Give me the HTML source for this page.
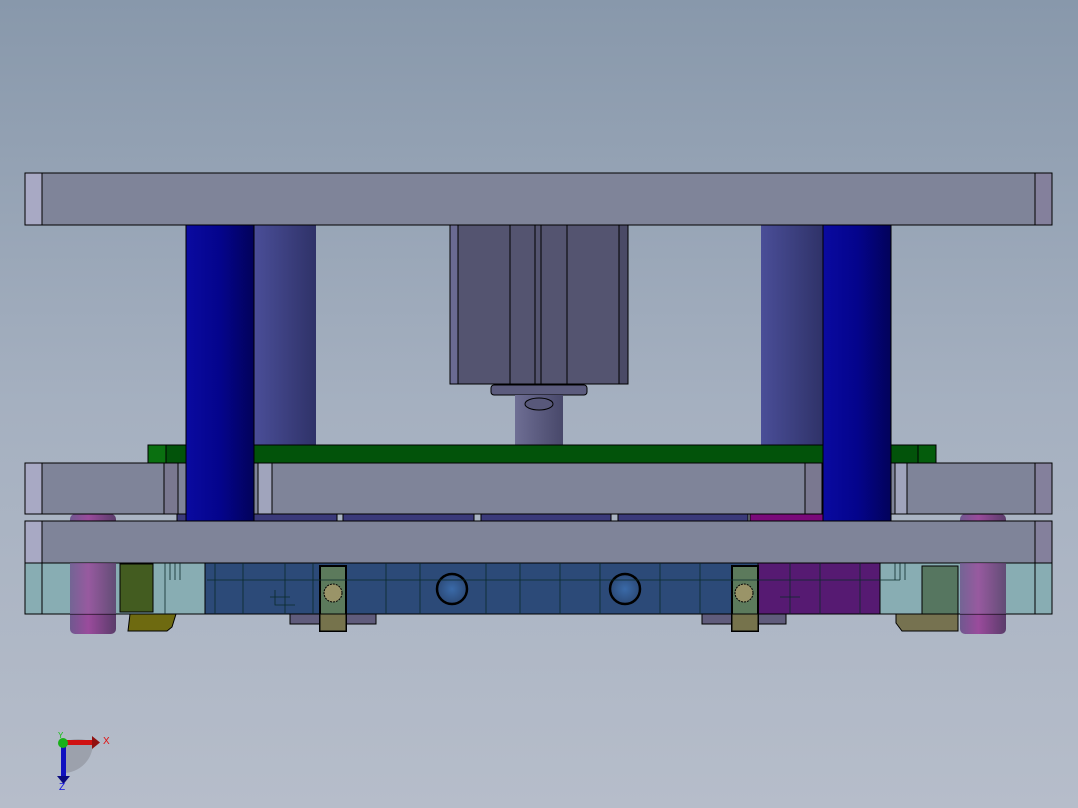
<!DOCTYPE html>
<html><head><style>
html,body{margin:0;padding:0;width:1078px;height:808px;overflow:hidden}
body{background:linear-gradient(#8898ab 0%,#a5b0c0 50%,#b6bdca 100%)}
svg{display:block}
</style></head><body>
<svg width="1078" height="808" viewBox="0 0 1078 808" xmlns="http://www.w3.org/2000/svg" font-family="Liberation Sans, sans-serif">
<defs>
<linearGradient id="blu" x1="0" x2="1"><stop offset="0" stop-color="#0a0aa0"/><stop offset="0.5" stop-color="#04048c"/><stop offset="1" stop-color="#02025a"/></linearGradient>
<linearGradient id="bback" x1="0" x2="1"><stop offset="0" stop-color="#4a4e98"/><stop offset="1" stop-color="#2f3268"/></linearGradient>
<linearGradient id="pink" x1="0" x2="1"><stop offset="0" stop-color="#70588f"/><stop offset="0.4" stop-color="#9a4b9c"/><stop offset="1" stop-color="#5a3c6a"/></linearGradient>
<linearGradient id="neck" x1="0" x2="1"><stop offset="0" stop-color="#6e6e94"/><stop offset="1" stop-color="#48486a"/></linearGradient>
<radialGradient id="hole"><stop offset="0" stop-color="#3a6aa8"/><stop offset="1" stop-color="#2c4a78"/></radialGradient>
</defs>
<g stroke="#000" stroke-width="1">
<rect x="254" y="225" width="62" height="222" fill="url(#bback)" stroke="none"/>
<rect x="761" y="225" width="62" height="222" fill="url(#bback)" stroke="none"/>
<rect x="450" y="225" width="178" height="159" fill="#545470"/>
<rect x="450" y="225" width="8" height="159" fill="#6a6a92"/>
<rect x="619" y="225" width="9" height="159" fill="#4a4a66"/>
<path d="M510 225V384M535 225V384M541 225V384M567 225V384" fill="none"/>
<rect x="491" y="385" width="96" height="10" rx="3" fill="#5c5c7e"/>
<rect x="515" y="395" width="48" height="52" fill="url(#neck)" stroke="none"/>
<ellipse cx="539" cy="404" rx="14" ry="6" fill="#58587a"/>
<rect x="148" y="445" width="788" height="18" fill="#02530a"/>
<rect x="148" y="445" width="18" height="18" fill="#0a7010"/>
<rect x="918" y="445" width="18" height="18" fill="#045c0c"/>
<rect x="25" y="173" width="1027" height="52" fill="#7f8499"/>
<rect x="25" y="173" width="17" height="52" fill="#a8a9c4"/>
<rect x="1035" y="173" width="17" height="52" fill="#84809c"/>
<rect x="177" y="514" width="160" height="7" fill="#3b3a7a"/>
<rect x="343" y="514" width="131" height="7" fill="#3b3a7a"/>
<rect x="481" y="514" width="130" height="7" fill="#3b3a7a"/>
<rect x="618" y="514" width="130" height="7" fill="#3b3a7a"/>
<rect x="750" y="514" width="140" height="7" fill="#7a0a7a"/>
<rect x="70" y="514" width="46" height="120" rx="5" fill="url(#pink)" stroke="none"/>
<rect x="960" y="514" width="46" height="120" rx="5" fill="url(#pink)" stroke="none"/>
<rect x="25" y="463" width="1027" height="51" fill="#7f8499"/>
<rect x="25" y="463" width="17" height="51" fill="#a8a9c4"/>
<rect x="1035" y="463" width="17" height="51" fill="#84809c"/>
<rect x="164" y="463" width="14" height="51" fill="#7a7890"/>
<rect x="258" y="463" width="14" height="51" fill="#a0a4bc"/>
<rect x="805" y="463" width="17" height="51" fill="#7a7890"/>
<rect x="895" y="463" width="12" height="51" fill="#a0a4bc"/>
<rect x="186" y="225" width="68" height="296" fill="url(#blu)"/>
<rect x="823" y="225" width="68" height="296" fill="url(#blu)"/>
<rect x="25" y="521" width="1027" height="42" fill="#7f8499"/>
<rect x="25" y="521" width="17" height="42" fill="#a8a9c4"/>
<rect x="1035" y="521" width="17" height="42" fill="#84809c"/>
<rect x="25" y="563" width="180" height="51" fill="#88adb3"/>
<rect x="205" y="563" width="553" height="51" fill="#2c4a78"/>
<rect x="758" y="563" width="122" height="51" fill="#561a72"/>
<rect x="880" y="563" width="172" height="51" fill="#88adb3"/>
<rect x="70" y="563" width="46" height="51" fill="url(#pink)" opacity="0.85" stroke="none"/>
<rect x="960" y="563" width="46" height="51" fill="url(#pink)" opacity="0.85" stroke="none"/>
<path d="M42 563V614M1035 563V614" fill="none"/>
<rect x="120" y="564" width="33" height="48" fill="#435c20"/>
<rect x="922" y="566" width="36" height="48" fill="#567660"/>
<path d="M130 614h46l-4 13l-5 4h-39z" fill="#6e6a10"/>
<path d="M896 614h62v17h-56l-6-8z" fill="#767250"/>
<rect x="290" y="614" width="86" height="10" fill="#605c7c"/>
<rect x="702" y="614" width="84" height="10" fill="#605c7c"/>
<rect x="320" y="566" width="26" height="65" fill="#5c7a5c" stroke-width="2"/>
<rect x="320" y="614" width="26" height="17" fill="#76734c"/>
<rect x="732" y="566" width="26" height="65" fill="#5c7a5c" stroke-width="2"/>
<rect x="732" y="614" width="26" height="17" fill="#76734c"/>
<circle cx="333" cy="593" r="9" fill="#9a9468" stroke-dasharray="2 1"/>
<circle cx="744" cy="593" r="9" fill="#9a9468" stroke-dasharray="2 1"/>
<circle cx="452" cy="589" r="15" fill="url(#hole)" stroke-width="2.5"/>
<circle cx="625" cy="589" r="15" fill="url(#hole)" stroke-width="2.5"/>
<g stroke="#0a2a2a" stroke-width="0.8" fill="none">
<path d="M207 580H900M215 563V614M243 563V614M285 563V614M313 563V614M386 563V614M420 563V614M486 563V614M520 563V614M560 563V614M600 563V614M660 563V614M700 563V614M790 563V614M820 563V614M860 563V614"/>
<path d="M270 597h20M780 597h20M275 590V605h20"/>
<path d="M165 563V614M170 563V580M175 563V580M180 563V580M895 563V580M900 563V580M905 563V580"/>
</g>
</g>
<path d="M63 743 A30 30 0 0 1 93 743 A30 30 0 0 1 63 773Z" fill="#8c8f99" opacity="0.6"/>
<rect x="61" y="743" width="5" height="34" fill="#1010c0"/>
<path d="M57 776h13l-6.5 8z" fill="#0a0a80"/>
<rect x="63" y="740" width="30" height="5" fill="#d01010"/>
<path d="M92 736v13l8-6.5z" fill="#901010"/>
<circle cx="63" cy="743" r="5" fill="#18b018"/>
<text x="103" y="744" font-size="10" fill="#e01010">X</text>
<text x="59" y="790" font-size="10" fill="#1010e0">Z</text>
<text x="58" y="738" font-size="8" fill="#10c010">Y</text>
</svg>
</body></html>
